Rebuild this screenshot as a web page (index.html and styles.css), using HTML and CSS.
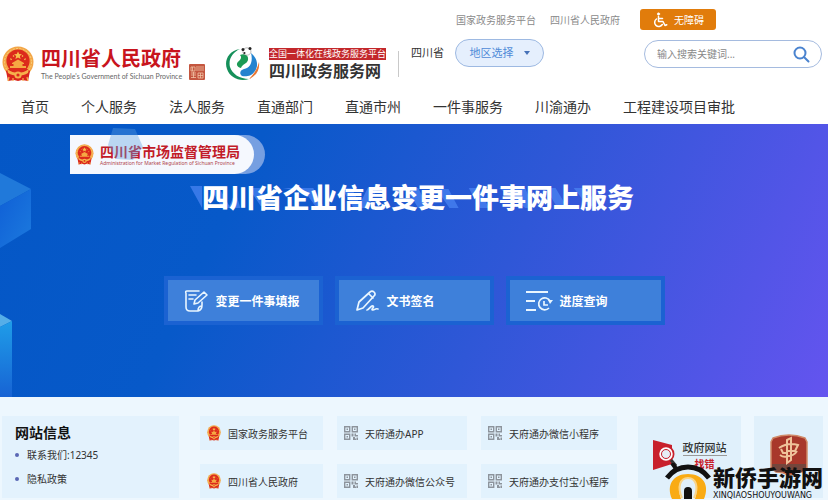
FILE: index.html
```html
<!DOCTYPE html>
<html lang="zh-CN">
<head>
<meta charset="utf-8">
<meta name="viewport" content="width=device-width, initial-scale=1">
<title>四川省企业信息变更一件事网上服务</title>
<link rel="stylesheet" href="styles.css">
</head>
<body>
<svg class="defs" aria-hidden="true">
  <symbol id="emblem" viewBox="0 0 32 36">
    <circle cx="16" cy="16" r="15.5" fill="#f3a647"/>
    <circle cx="16" cy="16" r="13.5" fill="none" stroke="#f9cf7a" stroke-width="1" stroke-dasharray="2 1.4"/>
    <path d="M4 25l4-3h16l4 3-2 10-6-1-4 1-4-1-6 1z" fill="#d9241c"/>
    <circle cx="16" cy="15" r="11.6" fill="#dc2a1c"/>
    <path d="M16 5.500l1.200 2.600 2.800.2-2.200 1.800.8 2.800-2.600-1.500-2.600 1.500.8-2.800L12 8.300l2.800-.2z" fill="#f8c04e"/>
    <path d="M8.500 12.500l1 1.500M11 9.500l1 1M23.500 12.500l-1 1.500M21 9.500l-1 1" stroke="#f8c04e" stroke-width="1.300"/>
    <path d="M10 17l6-3.500 6 3.500v1h-1.500v2H24v2H8v-2h3.500v-2H10z" fill="#f5a843"/>
    <path d="M5 23c4 3 7 3.500 11 3.500S23 26 27 23l-1 4c-3 2-6 2.500-10 2.500S9 29 6 27z" fill="#f6b04c"/>
    <circle cx="16" cy="29" r="3.600" fill="#f6b04c"/><circle cx="16" cy="29" r="1.600" fill="#dc2a1c"/>
    <path d="M7 31l-1 4M11 32v3M21 32v3M25 31l1 4" stroke="#f6b04c" stroke-width="1.200"/>
  </symbol>
  <symbol id="qr" viewBox="0 0 14 14">
    <g fill="none" stroke="#8d949c" stroke-width="1.400"><path d="M.7.7h5v5h-5zM8.300.7h5v5h-5zM.7 8.300h5v5h-5z"/></g>
    <path d="M2.500 2.500h1.500v1.500H2.500zM10 2.500h1.500v1.500H10zM2.500 10h1.500v1.500H2.500zM7.500 7.500h2v3h-2zM10.500 7.500H12V9h2v1.500h-3.500zM9 11h2v1.500h1.500V14H9zM12.500 11.500H14V14h-1z" fill="#8d949c"/>
  </symbol>
</svg>

<header class="header">
  <div class="utility">
    <a href="#">国家政务服务平台</a>
    <a href="#">四川省人民政府</a>
    <button class="access" type="button">
      <svg width="16" height="16" viewBox="0 0 16 16" fill="none" stroke="#fff" stroke-width="1.500" stroke-linecap="round" stroke-linejoin="round"><circle cx="6.500" cy="2" r="1.200" fill="#fff" stroke-width=".6"/><path d="M6.500 4.500v5h4.500l2 4 1.800-.8M6.500 6.500h4M4.500 7A4.100 4.100 0 1 0 10.300 12.500"/></svg>
      无障碍
    </button>
  </div>

  <div class="masthead">
    <a class="brand gov" href="#">
      <svg width="32" height="36"><use href="#emblem"/></svg>
      <span class="gov-name">
        <strong>四川省人民政府</strong>
        <small>The People's Government of Sichuan Province</small>
      </span>
      <svg class="seal" width="16" height="16" viewBox="0 0 16 16"><rect width="16" height="16" rx="1" fill="#c4563f"/><path d="M2 3h4v4H2zM3.500 3v4M8 2v5M10 2v5M12 2v5M14 2v5M2 9h5M2 11h5M2 13.500h5M4.500 8v6M9 9h5v5H9zM11.500 9v5M9 11.500h5" fill="none" stroke="#f1c3a4" stroke-width=".8"/></svg>
    </a>
    <a class="brand service" href="#">
      <svg width="36" height="36" viewBox="0 0 36 36">
        <path d="M15 3C3 5-1 15 2 23c3 9 13 13 22 10C15 33 7 28 5 21 3 13 8 6 15 3z" fill="#15905a"/>
        <path d="M15 9c4-2 9 0 8 5-1 4-6 4-7 8-5-1-5-5-2-7 2-2 3-4 1-6z" fill="#1b9a55"/>
        <path d="M26 7c6 5 8 12 4 18-3 5-9 6-13 5-3-2-2-6 2-7 7-1 9-8 7-16z" fill="#2383cf"/>
        <path d="M34 16c1 8-3 14-10 17 4-4 8-9 10-17z" fill="#e87632"/>
        <path d="M18 4c3-4 8-2 8 2-1 4-6 4-8 1z" fill="#fff" stroke="#777" stroke-width=".5"/>
        <circle cx="18" cy="3.500" r="1.500" fill="#222"/><circle cx="25" cy="2.500" r="1.500" fill="#222"/><circle cx="19.500" cy="7" r="1" fill="#222"/>
      </svg>
      <span class="service-name">
        <small>全国一体化在线政务服务平台</small>
        <strong>四川政务服务网</strong>
      </span>
    </a>
    <div class="region">
      <span>四川省</span>
      <button type="button" class="region-pick">地区选择 <i></i></button>
    </div>
    <form class="search" role="search">
      <input type="search" aria-label="搜索" placeholder="输入搜索关键词...">
      <button type="button" aria-label="搜索">
        <svg width="17" height="17" viewBox="0 0 17 17" fill="none" stroke="#4a83cf" stroke-width="2" stroke-linecap="round"><circle cx="7" cy="7" r="5.500"/><path d="M11.200 11.200L15.500 15.500"/></svg>
      </button>
    </form>
  </div>

  <nav class="nav">
    <a href="#">首页</a>
    <a href="#">个人服务</a>
    <a href="#">法人服务</a>
    <a href="#">直通部门</a>
    <a href="#">直通市州</a>
    <a href="#">一件事服务</a>
    <a href="#">川渝通办</a>
    <a href="#">工程建设项目审批</a>
  </nav>
</header>

<main class="hero">
  <svg class="cubes" width="60" height="273" viewBox="0 0 60 273" aria-hidden="true">
    <defs>
      <linearGradient id="side" x1="0" y1="0" x2="1" y2="1"><stop offset="0" stop-color="#0f5fd6"/><stop offset="1" stop-color="#1c7ade"/></linearGradient>
      <linearGradient id="pillar" x1="0" y1="0" x2="0" y2="1"><stop offset="0" stop-color="#1f9de8"/><stop offset="1" stop-color="#1763d4"/></linearGradient>
    </defs>
    <path d="M0 49L31 65 0 82z" fill="#2079da"/>
    <path d="M0 82L31 65V105L0 124z" fill="url(#side)"/>
    <path d="M0 190L12 197 0 203z" fill="#55aee8"/>
    <path d="M0 203L12 197V273H0z" fill="url(#pillar)"/>
  </svg>
  <div class="bureau">
    <div class="bureau-face">
      <svg width="19" height="21"><use href="#emblem"/></svg>
      <span>
        <strong>四川省市场监督管理局</strong>
        <small>Administration for Market Regulation of Sichuan Province</small>
      </span>
    </div>
    <svg class="bureau-gem" width="36" height="34" viewBox="0 0 36 34" aria-hidden="true"><path d="M5 1l22 1 8 18-10 13L8 32 0 18z" fill="#5a9fe0" fill-opacity=".38"/></svg>
  </div>
  <div class="headline">
    <svg class="shade" viewBox="0 0 410 24" preserveAspectRatio="none" aria-hidden="true"><path d="M0 0h12v22zM20 2h9l10 18 6-14 5 16H32zM58 2h12l8 18h-8zM92 2h30l10 18h-8L114 6zM150 2h10l8 16 8-16h10l-10 20h-14zM214 2h12l10 20h-10zM244 3h12l10 19h-9zM276 2h10l10 20h-9zM306 2h26l8 20h-8zM352 2h10l12 20h-10zM380 2h14l8 18h-8z" fill="#4b86f4" fill-opacity=".7"/></svg>
    <h1>四川省企业信息变更一件事网上服务</h1>
  </div>
  <div class="actions">
    <a href="#">
      <svg width="25" height="24" viewBox="0 0 25 24" fill="none" stroke="#e9f6ff" stroke-width="1.600" stroke-linecap="round" stroke-linejoin="round"><path d="M15 2H3Q1 2 2 4.500V18Q2 22 6 22H14Q18 21 18 16V13M14 22Q14 17 18 17M5 6h7M5 10h4"/><path d="M10 15l1-4 9-8 3 3-9 8z"/></svg>
      变更一件事填报
    </a>
    <a href="#">
      <svg width="25" height="24" viewBox="0 0 25 24" fill="none" stroke="#e9f6ff" stroke-width="1.700" stroke-linecap="round" stroke-linejoin="round"><path d="M2 21l2-8L15 3q2-2 4 0t0 4L8 19zM14 5l4 4M12 21c2 0 4-5 6-4 2 1-3 4 0 4 2 0 2-2 5-1"/></svg>
      文书签名
    </a>
    <a href="#">
      <svg width="27" height="24" viewBox="0 0 27 24" fill="none" stroke="#e9f6ff" stroke-width="1.900"><path d="M0 3h22M0 12h9M0 21h10"/><path d="M23 19a6 6 0 1 1 1-7M18 12v4h4" stroke-width="1.700"/><path d="M22 11h5l-3 4z" fill="#e9f6ff" stroke="none"/></svg>
      进度查询
    </a>
  </div>
</main>

<footer class="footer">
  <section class="site-info">
    <h2>网站信息</h2>
    <ul>
      <li><a href="#">联系我们:12345</a></li>
      <li><a href="#">隐私政策</a></li>
    </ul>
  </section>
  <div class="links">
    <a href="#"><svg width="14" height="16"><use href="#emblem"/></svg>国家政务服务平台</a>
    <a href="#"><svg width="14" height="14"><use href="#qr"/></svg>天府通办APP</a>
    <a href="#"><svg width="14" height="14"><use href="#qr"/></svg>天府通办微信小程序</a>
    <a href="#"><svg width="14" height="16"><use href="#emblem"/></svg>四川省人民政府</a>
    <a href="#"><svg width="14" height="14"><use href="#qr"/></svg>天府通办微信公众号</a>
    <a href="#"><svg width="14" height="14"><use href="#qr"/></svg>天府通办支付宝小程序</a>
  </div>
  <div class="marks">
    <a class="report" href="#">
      <svg width="24" height="30" viewBox="0 0 24 30"><path d="M0 0l19 5v19L0 30z" fill="#c8202c"/><circle cx="13" cy="14" r="8.500" fill="#c8202c"/><circle cx="13" cy="14" r="6" fill="#f2dfe5" stroke="#fff" stroke-width="1.500"/><circle cx="13" cy="14" r="4.500" fill="#e6eef6" stroke="#c8202c"/><path d="M18 20l5 6" stroke="#333" stroke-width="3"/></svg>
      <span><b>政府网站</b><em>找错</em></span>
    </a>
    <a class="party" href="#" aria-label="党政机关">
      <svg width="38" height="42" viewBox="0 0 38 42"><path d="M3 4Q19-2 35 4l2 4v26l-5 4q-8 0-13 4-5-4-13-4l-5-4V8z" fill="#a8382b" stroke="#d08a68" stroke-width="1.500"/><path d="M2 30h34v4l-4 4H6l-4-4z" fill="#74463c"/><path d="M17 6l4-2v22l-4 3zM9 14Q18 8 28 11L25 17H18M11 15l2 4h5M10 21q4 3 8 1 6 0 9-5" fill="none" stroke="#efc29a" stroke-width="2"/></svg>
    </a>
  </div>
  <div class="watermark">
    <svg width="46" height="36" viewBox="0 0 46 36" aria-hidden="true">
      <path d="M7 36C1 22 8 11 23 11S45 22 39 36H30C34 24 31 15 23 15S12 24 16 36z" fill="#f9ab14"/>
      <path d="M17 35C12 24 15 15 23 15S34 24 29 35" fill="none" stroke="#f9d58a" stroke-width="2"/>
      <path d="M2 15C8 7 14 4 23 4S38 7 44 15" fill="none" stroke="#111" stroke-width="5"/>
      <path d="M7 0l5 7" stroke="#111" stroke-width="4"/>
      <path d="M19 36V28Q19 24 23 24T27 28V36z" fill="#111"/>
    </svg>
    <span><b>新侨手游网</b><small>XINQIAOSHOUYOUWANG</small></span>
  </div>
</footer>
</body>
</html>
```

FILE: styles.css
```css
* { box-sizing: border-box; }

body {
  margin: 0;
  background: #edf7fe;
  color: #333;
  font-family: "Noto Sans", "Noto Sans CJK SC", sans-serif;
  font-size: 10px;
  overflow-x: hidden;
}

a { color: inherit; text-decoration: none; }
button, input { font: inherit; border: 0; padding: 0; background: none; }
svg { display: block; flex: none; }
strong, small, b, em { display: block; font-style: normal; }
.defs { position: absolute; width: 0; height: 0; }

/* Header */
.header { background: #fff; }

.utility {
  display: flex;
  align-items: center;
  justify-content: flex-end;
  gap: 14px;
  padding: 9px 112px 0 0;
  color: #8a8a8a;
}

.access {
  display: flex;
  align-items: center;
  justify-content: center;
  gap: 6px;
  width: 76px;
  height: 21px;
  margin-left: 6px;
  border-radius: 3px;
  background: #e17c0b;
  color: #fff;
}

.masthead {
  display: flex;
  align-items: flex-start;
  height: 50px;
  margin-top: 9px;
  padding: 0 6px 0 2px;
}

.brand { display: flex; margin-top: 7px; }
.gov { gap: 7px; }
.gov-name strong { color: #c8141d; font-size: 20px; line-height: 26px; }
.gov-name small {
  color: #666;
  font-family: Lato, sans-serif;
  font-size: 7px;
  line-height: 8px;
  white-space: nowrap;
}
.seal { margin-top: 18px; }

.service { gap: 8px; margin-left: 20px; }
.service-name small {
  margin-top: 2px;
  background: #c3272b;
  color: #fff;
  font-size: 9px;
  line-height: 12px;
  white-space: nowrap;
}
.service-name strong { color: #333; font-size: 16px; line-height: 22px; }

.region {
  display: flex;
  margin-left: 12px;
  font-size: 11px;
  line-height: 28px;
  white-space: nowrap;
}
.region::before {
  content: "";
  width: 1px;
  height: 26px;
  margin: 12px 12px 0 0;
  background: #c9c9c9;
}
.region-pick {
  display: flex;
  align-items: center;
  justify-content: center;
  gap: 10px;
  width: 89px;
  height: 28px;
  margin-left: 11px;
  border: 1px solid #9db9e2;
  border-radius: 14px;
  background: #e5effd;
  color: #4f8bd8;
}
.region-pick i {
  border: 3px solid transparent;
  border-top: 4px solid #4571b8;
  border-bottom: 0;
}

.search {
  display: flex;
  align-items: center;
  width: 178px;
  height: 28px;
  margin: 1px 0 0 auto;
  padding: 0 11px 0 12px;
  border: 1px solid #a5bbdf;
  border-radius: 14px;
}
.search input { flex: 1; min-width: 0; outline: 0; }
.search input::placeholder { color: #888; }

.nav {
  display: flex;
  gap: 32px;
  padding-left: 21px;
  font-size: 14px;
  line-height: 35px;
  white-space: nowrap;
}

/* Hero */
.hero {
  position: relative;
  padding: 11px 0 76px;
  background: linear-gradient(115deg, #0457c6 0%, #0759c9 28%, #2f57d7 60%, #6454ef 100%);
}
.cubes { position: absolute; left: 0; top: 0; }

.bureau {
  position: relative;
  width: 195px;
  margin-left: 70px;
  border-radius: 0 20px 20px 0;
  background: #769fe1;
}
.bureau-face {
  display: flex;
  align-items: center;
  gap: 6px;
  width: 184px;
  height: 39px;
  padding-left: 5px;
  border-radius: 0 20px 20px 0;
  background: #f5f8fe;
}
.bureau-face strong { color: #c21b28; font-size: 14px; line-height: 17px; }
.bureau-face small {
  color: #b0444c;
  font-size: 5px;
  line-height: 6px;
  white-space: nowrap;
}
.bureau-gem { position: absolute; left: 38px; top: -8px; }

.headline { position: relative; margin-top: 8px; padding-left: 8px; }
.headline h1 {
  position: relative;
  margin: 0;
  color: #fff;
  font-size: 27px;
  font-weight: 900;
  line-height: 32px;
  text-align: center;
}
.shade { position: absolute; left: 23%; top: 4px; width: 50%; height: 24px; }

.actions {
  display: flex;
  justify-content: center;
  gap: 20px;
  margin-top: 66px;
}
.actions a {
  display: flex;
  align-items: center;
  gap: 7px;
  width: 151px;
  height: 41px;
  padding-left: 16px;
  background: #3e80da;
  box-shadow: 0 0 0 4px #1b62d2;
  color: #fff;
  font-size: 12px;
  font-weight: 700;
  white-space: nowrap;
}

/* Footer */
.footer {
  position: relative;
  display: grid;
  grid-template-columns: 177fr 417fr 185fr;
  gap: 21px;
  padding: 19px 5px 3px 2px;
  background: #edf7fe;
}
.site-info {
  padding-left: 13px;
  background: #e3f2fd;
}
.site-info h2 {
  margin: 7px 0 0;
  color: #111;
  font-size: 14px;
  line-height: 20px;
}
.site-info ul { margin: 0; padding: 0; list-style: none; }
.site-info li {
  display: flex;
  align-items: center;
  gap: 8px;
  line-height: 24px;
}
.site-info li::before {
  content: "";
  width: 4px;
  height: 4px;
  border-radius: 50%;
  background: #5a67b4;
}

.links {
  display: grid;
  grid-template-columns: 123fr 130fr 136fr;
  gap: 14px;
}
.links a {
  display: flex;
  align-items: center;
  gap: 7px;
  height: 34px;
  padding-left: 7px;
  background: #e2f2fd;
  white-space: nowrap;
}

.marks {
  display: grid;
  grid-template-columns: 103fr 69fr;
  gap: 13px;
}
.marks a {
  display: flex;
  justify-content: center;
  background: #e0f0fb;
}
.marks .report { gap: 6px; padding-top: 24px; }
.report span { text-align: center; }
.report b { border-bottom: 1px solid #999; font-weight: 500; font-size: 11px; line-height: 15px; }
.report em { color: #c8202c; font-size: 10px; font-weight: 700; line-height: 16px; }
.marks .party { padding-top: 18px; }

.watermark {
  position: absolute;
  right: 5px;
  bottom: 0;
  display: flex;
  gap: 2px;
  color: #111;
}
.watermark b { font-size: 22px; font-weight: 900; line-height: 28px; }
.watermark small {
  font-family: "DejaVu Sans", sans-serif;
  font-size: 8px;
  line-height: 10px;
}
```
